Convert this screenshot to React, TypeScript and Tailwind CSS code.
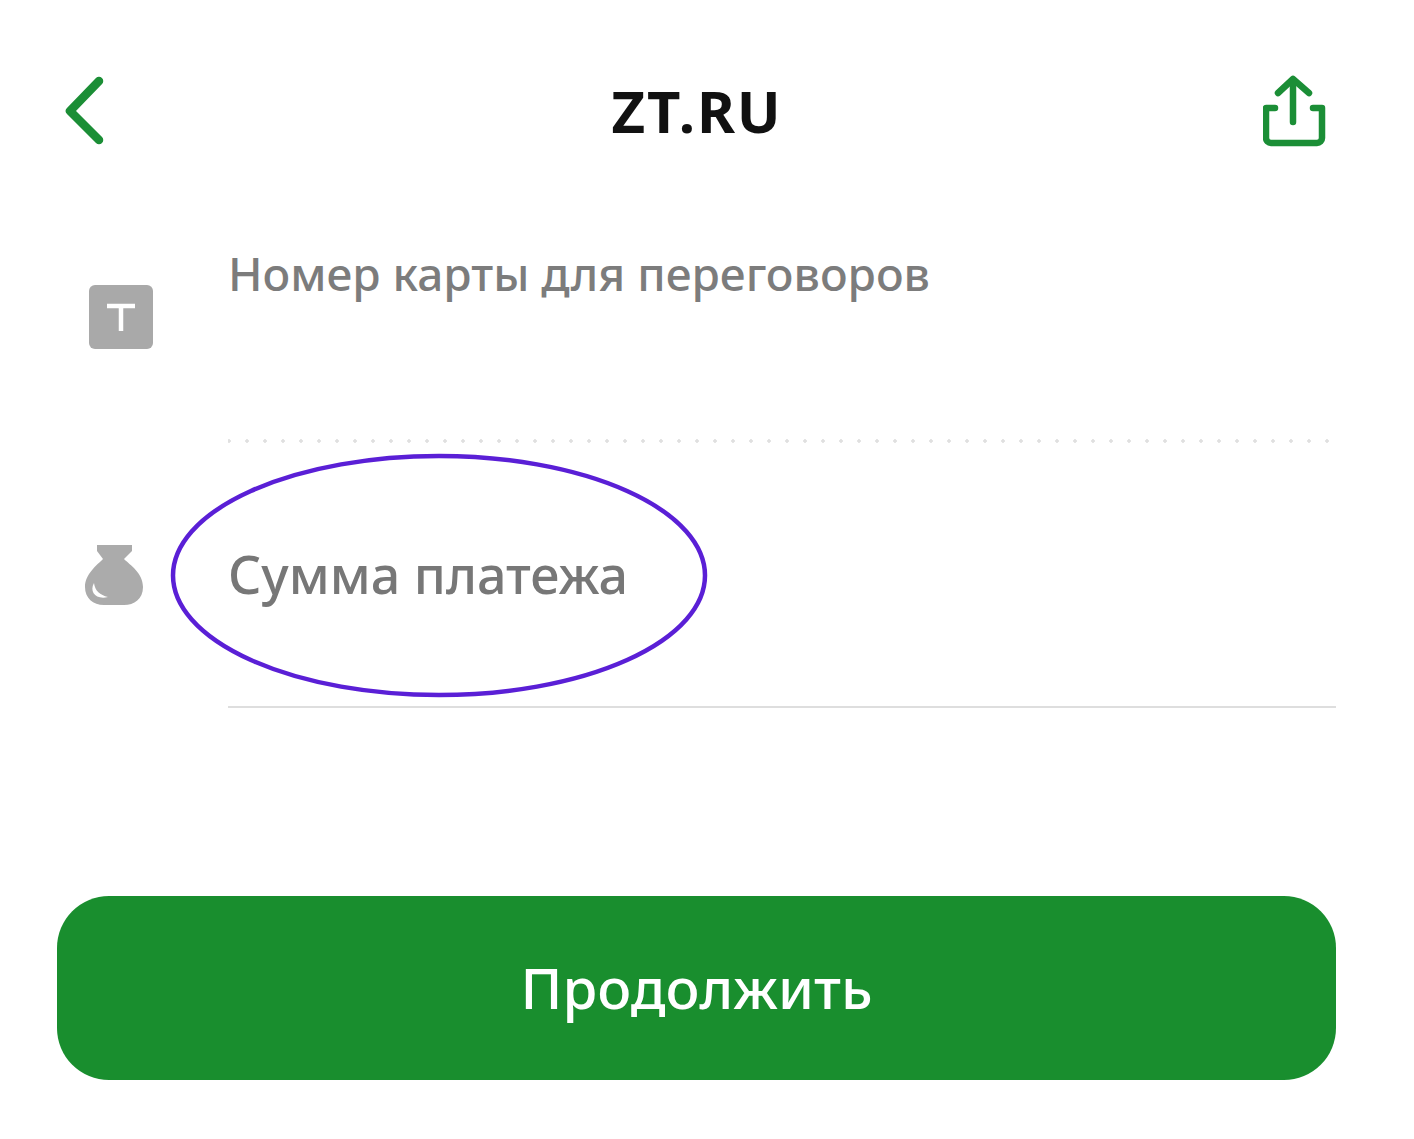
import React from 'react';

function BackIcon() {
  return (
    <svg width="48" height="76" viewBox="0 0 48 76" fill="none" stroke="#1b8e36" strokeWidth="8.5" strokeLinecap="round" strokeLinejoin="round">
      <polyline points="39,8 10,38 39,67" />
    </svg>
  );
}

function ShareIcon() {
  return (
    <svg width="64" height="72" viewBox="0 0 64 72" fill="none" stroke="#1b8e36" strokeWidth="6.5" strokeLinecap="round" strokeLinejoin="round">
      <path d="M15 18 L30 4 L46 18" />
      <path d="M30 5 V47" />
      <path d="M12 33 H3 V63 a5 5 0 0 0 5 5 H54 a5 5 0 0 0 5 -5 V33 H50" />
    </svg>
  );
}

function TextIcon() {
  return (
    <div className="flex h-[64px] w-[64px] items-center justify-center rounded-[6px] bg-[#a9a9a9]">
      <svg width="30" height="30" viewBox="0 0 30 30" fill="none" stroke="#ffffff" strokeWidth="4.5">
        <path d="M1 4 H29 M15 4 V29" />
      </svg>
    </div>
  );
}

function BagIcon() {
  return (
    <svg width="60" height="62" viewBox="0 0 60 62">
      <path
        d="M13 0 H48 V6 L40 14 C46 20 59 28 59 42 C59 54 50 60 40 60 H20 C9 60 1 53 1 42 C1 29 13 20 19 14 L13 6 Z"
        fill="#ababab"
      />
      <path d="M10 38 C5 47 12 55 24 52 C16 50 11 46 10 38 Z" fill="#ffffff" />
    </svg>
  );
}

export default function App() {
  return (
    <div className="relative flex h-[1139px] w-full flex-col overflow-hidden bg-white font-['Noto_Sans',sans-serif]">
      {/* Header */}
      <div className="mt-[73px] flex h-[76px] items-center justify-between pl-[60px] pr-[87px]">
        <BackIcon />
        <h1 className="ml-[23px] text-[58px] font-bold leading-none tracking-[1.8px] text-[#111111]">ZT.RU</h1>
        <ShareIcon />
      </div>

      {/* Fields */}
      <div className="mt-[91px] flex pl-[89px] pr-[78px]">
        <div className="w-[139px] pt-[45px]">
          <TextIcon />
        </div>
        <div className="flex h-[201px] flex-1 flex-col justify-between">
          <p className="mt-[-2px] text-[46px] font-medium leading-[70px] text-[#7c7c7c]">Номер карты для переговоров</p>
          <div className="mb-[-2px] h-[4px] bg-[radial-gradient(circle,#e0e0e0_1.5px,transparent_2px)] bg-[length:18px_4px] bg-[position:-8px_0]" />
        </div>
      </div>

      <div className="flex pl-[84px] pr-[78px]">
        <div className="w-[144px] pt-[104px]">
          <BagIcon />
        </div>
        <div className="h-[267px] flex-1 border-b-2 border-[#dedede] pt-[97px]">
          <p className="text-[52px] font-medium leading-[72px] text-[#777777]">Сумма платежа</p>
        </div>
      </div>

      {/* Button */}
      <div className="mt-[188px] pl-[57px] pr-[78px]">
        <button className="flex h-[184px] w-full items-center justify-center rounded-[52px] bg-[#198e2e] text-[56.5px] font-medium leading-none text-white">
          Продолжить
        </button>
      </div>

      {/* Hand-drawn annotation */}
      <svg className="absolute left-[165px] top-[450px]" width="548" height="252" viewBox="0 0 548 252" fill="none">
        <ellipse cx="274" cy="125.5" rx="266" ry="119.5" stroke="#5a1fd6" strokeWidth="4.5" />
      </svg>
    </div>
  );
}
